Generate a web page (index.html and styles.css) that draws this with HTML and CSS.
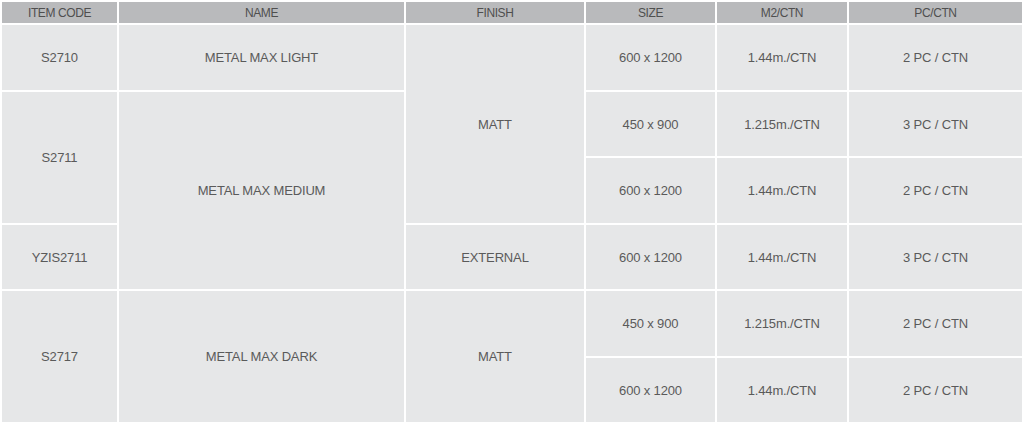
FILE: index.html
```html
<!DOCTYPE html>
<html>
<head>
<meta charset="utf-8">
<link rel="stylesheet" href="styles.css">
</head>
<body>
<table class="spec">
  <colgroup>
    <col class="c1"><col class="c2"><col class="c3"><col class="c4"><col class="c5"><col class="c6">
  </colgroup>
  <thead>
    <tr class="head">
      <th>ITEM CODE</th><th>NAME</th><th>FINISH</th><th>SIZE</th><th>M2/CTN</th><th>PC/CTN</th>
    </tr>
  </thead>
  <tbody>
    <tr class="r67">
      <td>S2710</td>
      <td>METAL MAX LIGHT</td>
      <td rowspan="3">MATT</td>
      <td>600 x 1200</td>
      <td>1.44m./CTN</td>
      <td>2 PC / CTN</td>
    </tr>
    <tr class="r66">
      <td rowspan="2">S2711</td>
      <td rowspan="3">METAL MAX MEDIUM</td>
      <td>450 x 900</td>
      <td>1.215m./CTN</td>
      <td>3 PC / CTN</td>
    </tr>
    <tr class="r67">
      <td>600 x 1200</td>
      <td>1.44m./CTN</td>
      <td>2 PC / CTN</td>
    </tr>
    <tr class="r66">
      <td>YZIS2711</td>
      <td>EXTERNAL</td>
      <td>600 x 1200</td>
      <td>1.44m./CTN</td>
      <td>3 PC / CTN</td>
    </tr>
    <tr class="r67">
      <td rowspan="2">S2717</td>
      <td rowspan="2">METAL MAX DARK</td>
      <td rowspan="2">MATT</td>
      <td>450 x 900</td>
      <td>1.215m./CTN</td>
      <td>2 PC / CTN</td>
    </tr>
    <tr class="r66">
      <td>600 x 1200</td>
      <td>1.44m./CTN</td>
      <td>2 PC / CTN</td>
    </tr>
  </tbody>
</table>
</body>
</html>
```

FILE: styles.css
```css
html, body {
  margin: 0;
  padding: 0;
  background: #ffffff;
}

.spec {
  border-collapse: collapse;
  table-layout: fixed;
  width: 1022px;
  font-family: "Liberation Sans", Arial, sans-serif;
  color: #5a5a5a;
}

.c1 { width: 117px; }
.c2 { width: 287px; }
.c3 { width: 180px; }
.c4 { width: 131px; }
.c5 { width: 132px; }
.c6 { width: 175px; }

.spec th,
.spec td {
  border: 2px solid #ffffff;
  padding: 0;
  text-align: center;
  vertical-align: middle;
}

.spec th {
  background: #b9babc;
  font-weight: normal;
  font-size: 12px;
  letter-spacing: -0.4px;
  color: #4f4f4f;
}

.head { height: 23px; }

.spec td {
  background: #e6e7e8;
  font-size: 13px;
  letter-spacing: -0.15px;
}

.r67 { height: 67px; }
.r66 { height: 66px; }
```
